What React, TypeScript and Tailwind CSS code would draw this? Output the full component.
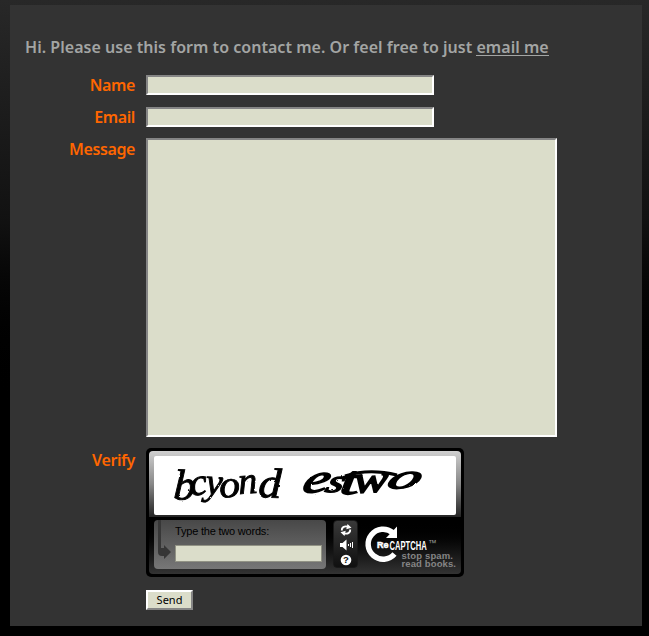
import React from "react";

const labelClass =
  "w-[125px] mr-px shrink-0 text-right font-['Noto_Sans',sans-serif] text-[16px] leading-[20px] font-semibold tracking-[-0.4px] text-[#ff6600]";
const fieldClass =
  "block rounded-none border-2 border-t-[#858585] border-l-[#858585] border-r-white border-b-white bg-[#dbddca] outline-none resize-none";

function Label({ text, className = "" }: { text: string; className?: string }) {
  return <label className={`${labelClass} ${className}`}>{text}</label>;
}

function Challenge() {
  return (
    <svg width="302" height="59" viewBox="0 0 302 59" className="block">
      <defs>
        <filter id="rough" x="-5%" y="-20%" width="110%" height="140%">
          <feTurbulence type="fractalNoise" baseFrequency="0.22" numOctaves="2" seed="4" result="n" />
          <feDisplacementMap in="SourceGraphic" in2="n" scale="1.8" />
        </filter>
      </defs>
      <g filter="url(#rough)" fill="#050505" stroke="#050505" strokeWidth="0.9" className="font-['Liberation_Serif',serif] italic">
        <text transform="translate(19 43) rotate(3) scale(1.02 1)" fontSize="43">b</text>
        <text transform="translate(37 40) rotate(-8) scale(1.05 1)" fontSize="38">c</text>
        <text transform="translate(51 38) rotate(4) scale(1 1)" fontSize="38">y</text>
        <text transform="translate(66 42) rotate(-5) scale(1.1 1)" fontSize="38">o</text>
        <text transform="translate(85 38) rotate(-4) scale(1 1)" fontSize="38">n</text>
        <text transform="translate(104 41) rotate(2) scale(1.1 1)" fontSize="42">d</text>
      </g>
      <g filter="url(#rough)" fill="#050505" stroke="#050505" strokeWidth="1.4" className="font-['Liberation_Serif',serif] italic">
        <text transform="translate(147 37) rotate(-3) skewX(-18) scale(1.65 1.1)" fontSize="36">e</text>
        <text transform="translate(170 36) skewX(-22) scale(1.4 1)" fontSize="32">s</text>
        <text transform="translate(185 38) skewX(-5) scale(1.9 1.1)" fontSize="36">t</text>
        <text transform="translate(199 37) rotate(-3) skewX(-5) scale(1.5 1.1)" fontSize="35">w</text>
        <text transform="translate(231 33) rotate(-3) skewX(-26) scale(2 1)" fontSize="33">o</text>
        <path d="M191 20q24-8 52-1" fill="none" strokeWidth="3" />
      </g>
    </svg>
  );
}

function ReloadIcon() {
  return (
    <svg width="12" height="12" viewBox="0 0 12 12" className="block" fill="none" stroke="#fff" strokeWidth="1.900">
      <path d="M1.800 6.500C1.500 3.500 4 1.800 7.800 2.600M10.200 5.500c.3 3-2.200 4.700-6 3.900" />
      <path d="M7.500 0L11.500 3.800 6.300 5.200zM4.500 12L.5 8.200l5.200-1.400z" fill="#fff" stroke="none" />
    </svg>
  );
}

function SoundIcon() {
  return (
    <svg width="14" height="12" viewBox="0 0 14 12" className="block">
      <path d="M1 4h2.500L7.500.5v11L3.500 8H1z" fill="#fff" />
      <path d="M9 5h1v2H9zM11 4h1v4h-1zM13 3h1v6h-1z" fill="#fff" />
    </svg>
  );
}

function HelpIcon() {
  return (
    <svg width="12" height="12" viewBox="0 0 12 12" className="block">
      <circle cx="6" cy="6" r="5.300" fill="#fff" />
      <text x="6" y="9.400" textAnchor="middle" fontSize="9.500" fontWeight="700" fill="#111" className="font-['Liberation_Sans',sans-serif]">?</text>
    </svg>
  );
}

function Logo() {
  return (
    <svg width="96" height="47" viewBox="0 0 96 47" className="block overflow-visible font-['Liberation_Sans',sans-serif]">
      <path d="M28.500 12.500A15 15 0 1 0 30.500 34" fill="none" stroke="#fff" strokeWidth="5.500" />
      <path d="M33 6.500v11.500H22z" fill="#fff" />
      <text x="13" y="27.500" fontSize="8.500" fontWeight="700" fill="#fff" stroke="#fff" strokeWidth=".5" textLength="11.500" lengthAdjust="spacingAndGlyphs">Re</text>
      <text transform="translate(25.500 29.500) scale(.61 1)" fontSize="13.500" fontWeight="700" fill="#fff" textLength="61" lengthAdjust="spacingAndGlyphs">CAPTCHA</text>
      <text x="64" y="26" fontSize="8.500" fill="#999">™</text>
      <text x="37.500" y="38.500" fontSize="9.500" fontWeight="700" fill="#858585" textLength="51.500" lengthAdjust="spacing">stop spam.</text>
      <text x="37.500" y="46.500" fontSize="9.500" fontWeight="700" fill="#858585" textLength="54.500" lengthAdjust="spacing">read books.</text>
    </svg>
  );
}

function Captcha() {
  return (
    <div className="h-[129px] w-[318px] rounded-[5px] bg-black p-[3px]">
      <div className="h-[66px] w-[312px] rounded-t-[4px] bg-linear-to-b from-[#d0d0d0] via-[#888] to-[#252525] px-[5px] pt-[5px]">
        <div className="h-[59px] overflow-hidden rounded-[2px] bg-white">
          <Challenge />
        </div>
      </div>
      <div className="h-[2px]" />
      <div className="flex h-[55px] w-[312px] items-start rounded-b-[4px] bg-linear-to-b from-black to-[#333] pt-px pl-[5px]">
        <div className="relative h-[49px] w-[172px] rounded-[4px] bg-linear-to-b from-[#484848] to-[#777] pt-[4px] pl-[21px]">
          <svg width="20" height="42" viewBox="0 0 20 42" className="absolute top-0 left-0">
            <path d="M5.500 0v28q0 5 5 5" fill="none" stroke="#363636" strokeWidth="3" />
            <path d="M4 28h6v-3l7 7-7 7v-3H8q-4 0-4-4z" fill="#363636" />
          </svg>
          <div className="font-['Liberation_Sans',sans-serif] text-[11px] leading-[14px] tracking-[-0.2px] text-black">Type the two words:</div>
          <input aria-label="Type the two words" className="mt-[7px] block h-[17px] w-[147px] rounded-none border border-[#929385] bg-[#dbddca] outline-none" />
        </div>
        <div className="ml-[7px] flex h-[48px] w-[25px] flex-col items-center justify-between rounded-[4px] border border-[#181818] bg-linear-to-b from-[#393939] to-[#101010] pt-[3px] pb-px">
          <ReloadIcon />
          <SoundIcon />
          <HelpIcon />
        </div>
        <div className="ml-[6px]">
          <Logo />
        </div>
      </div>
    </div>
  );
}

export default function App() {
  return (
    <div className="h-[636px] w-[649px] overflow-hidden bg-linear-to-b from-[#282828] via-[#111] via-35% to-black to-65% pt-[5px] pl-[10px]">
      <form className="h-[621px] w-[632px] bg-[#333] pt-[30px]" onSubmit={(e) => e.preventDefault()}>
        <p className="h-[40px] pl-[15px] font-['Noto_Sans',sans-serif] text-[16px] leading-[24px] font-semibold tracking-[0.03px] whitespace-nowrap text-[#a3a5a4]">
          Hi. Please use this form to contact me. Or feel free to just{" "}
          <a href="#email" className="inline-block h-[21px] border-b border-[#a3a5a4]">email me</a>
        </p>
        <div className="flex h-[32px] gap-[10px]">
          <Label text="Name" />
          <input aria-label="Name" className={`${fieldClass} h-[20px] w-[288px]`} />
        </div>
        <div className="flex h-[31px] gap-[10px]">
          <Label text="Email" />
          <input aria-label="Email" className={`${fieldClass} h-[20px] w-[288px]`} />
        </div>
        <div className="flex h-[310px] gap-[10px]">
          <Label text="Message" className="pt-px" />
          <textarea aria-label="Message" className={`${fieldClass} h-[299px] w-[411px]`} />
        </div>
        <div className="flex h-[142px] gap-[10px]">
          <Label text="Verify" className="pt-[2px]" />
          <Captcha />
        </div>
        <button className="ml-[136px] block h-[20px] w-[47px] border-2 border-t-white border-l-white border-r-[#858585] border-b-[#858585] bg-[#dbddca] font-['Noto_Sans',sans-serif] text-[11px] leading-[16px] text-black">Send</button>
      </form>
    </div>
  );
}
